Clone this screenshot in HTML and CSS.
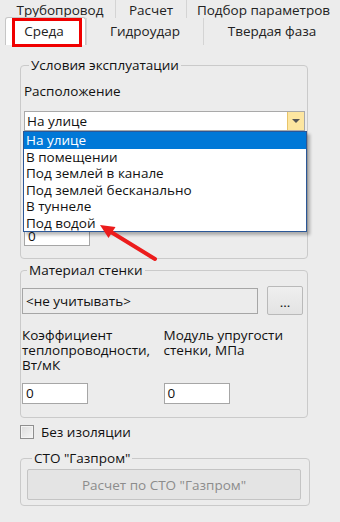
FILE: index.html
```html
<!DOCTYPE html>
<html lang="ru">
<head>
<meta charset="utf-8">
<link rel="stylesheet" href="styles.css">
</head>
<body>
<div class="tabs">
  <div class="tabrow row1">
    <span class="pad"></span>
    <span class="tab w110">Трубопровод</span>
    <span class="sep"></span>
    <span class="tab w70">Расчет</span>
    <span class="sep"></span>
    <span class="tab grow">Подбор параметров</span>
  </div>
  <div class="tabrow row2">
    <span class="pad"></span>
    <span class="tab sel">Среда</span>
    <span class="sep"></span>
    <span class="tab w116">Гидроудар</span>
    <span class="sep"></span>
    <span class="tab grow">Твердая фаза</span>
  </div>
  <div class="redbox"></div>
</div>

<div class="page">
  <fieldset class="group g1">
    <legend>Условия эксплуатации</legend>
    <div class="label first">Расположение</div>
    <div class="combo">
      <span class="combo-text">На улице</span>
      <span class="combo-btn"><span class="arrow"></span></span>
    </div>
    <div class="input depth">0</div>
  </fieldset>

  <fieldset class="group g2">
    <legend>Материал стенки</legend>
    <div class="matrow">
      <div class="matfield">&lt;не учитывать&gt;</div>
      <div class="btn dots">...</div>
    </div>
    <div class="cols">
      <div class="col">
        <div class="mlabel">Коэффициент<br>теплопроводности,<br>Вт/мК</div>
        <div class="input small">0</div>
      </div>
      <div class="col">
        <div class="mlabel">Модуль упругости<br>стенки, МПа</div>
        <div class="input small">0</div>
      </div>
    </div>
  </fieldset>

  <div class="check">
    <span class="box"></span>
    <span>Без изоляции</span>
  </div>

  <fieldset class="group g3">
    <legend>СТО "Газпром"</legend>
    <div class="btn wide">Расчет по СТО "Газпром"</div>
  </fieldset>
</div>

<ul class="droplist">
  <li class="hl">На улице</li>
  <li>В помещении</li>
  <li>Под землей в канале</li>
  <li>Под землей бесканально</li>
  <li>В туннеле</li>
  <li>Под водой</li>
</ul>

<svg class="redarrow" width="340" height="522" viewBox="0 0 340 522">
  <line x1="155" y1="259" x2="111" y2="232" stroke="#ec1c1c" stroke-width="4" stroke-linecap="round"/>
  <polygon points="100,225 115.5,227 108.5,238" fill="#ec1c1c"/>
</svg>
</body>
</html>
```

FILE: styles.css
```css
* { box-sizing: border-box; }
body {
  margin: 0;
  width: 340px;
  height: 522px;
  overflow: hidden;
  position: relative;
  background: #ececec;
  font: 13.5px "Open Sans", "Liberation Sans", Arial, sans-serif;
  color: #111;
}

/* tabs */
.tabs { position: relative; height: 46px; }
.tabrow { display: flex; }
.row1 { height: 18px; }
.row2 { height: 27px; }
.pad { width: 5px; flex: none; }
.tab { flex: none; text-align: center; color: #222; }
.row1 .tab { line-height: 21px; }
.row2 .tab { line-height: 27px; }
.w110 { width: 110px; }
.w70 { width: 70px; }
.w116 { width: 116px; }
.grow { flex: 1; }
.sep { width: 1px; flex: none; background: #d4d4d4; }
.tab.sel {
  width: 81px;
  background: #fff;
  border: 1px solid #c6c6c6;
  border-bottom: none;
  border-radius: 3px 3px 0 0;
  margin-top: -1px;
  padding-right: 3px;
}
.redbox {
  position: absolute;
  left: 12px;
  top: 18px;
  width: 70px;
  height: 29px;
  border: 3px solid #f00000;
}

/* page */
.page { padding: 12px 0 0 20px; }
.group {
  margin: 0;
  border: 1px solid #cacaca;
  border-radius: 4px;
  min-width: 0;
}
.group legend {
  padding: 0 2px;
  margin-left: 5px;
  line-height: 15px;
  color: #111;
}
.g1 { width: 288px; padding: 0 2px 12px 3px; }
.label.first { line-height: 16px; margin-top: 10px; }
.combo {
  margin-top: 12px;
  height: 20px;
  width: 281px;
  display: flex;
  background: #fff;
  border: 1px solid #a9a9a9;
}
.combo-text { flex: 1; line-height: 18px; padding-left: 2px; }
.combo-btn {
  width: 17px;
  background: #fde6a0;
  border-left: 1px solid #e8c46a;
  display: flex;
  align-items: center;
  justify-content: center;
}
.arrow {
  width: 0; height: 0;
  border-left: 4px solid transparent;
  border-right: 4px solid transparent;
  border-top: 4px solid #555;
}
.input {
  background: #fff;
  border: 1px solid #a6a6a6;
  padding-left: 3px;
  line-height: 18px;
}
.depth { margin-top: 95px; width: 66px; height: 20px; }

.g2 { width: 288px; margin-top: 4px; padding: 0 2px 13px 1px; }
.matrow { display: flex; align-items: center; margin-top: 8px; }
.matfield {
  width: 236px;
  height: 26px;
  border: 1px solid #a6a6a6;
  background: #ececec;
  padding: 3px 0 0 3px;
}
.btn {
  background: linear-gradient(#efefef, #e3e3e3);
  border: 1px solid #b9b9b9;
  border-radius: 2px;
  text-align: center;
}
.dots { width: 36px; height: 29px; margin-left: 9px; line-height: 30px; }
.cols { display: flex; margin-top: 13px; }
.col { width: 150px; }
.mlabel { line-height: 15px; height: 45px; }
.input.small { width: 66px; height: 21px; margin-top: 10px; line-height: 19px; }

.check { display: flex; align-items: center; height: 16px; margin-top: 6px; gap: 7px; }
.box {
  width: 14px; height: 14px;
  border: 1px solid #8f8f8f;
  background: linear-gradient(135deg, #dcdcdc, #f6f6f6);
  box-shadow: inset 0 0 0 1px #f4f4f4;
}

.g3 { width: 290px; margin-top: 11px; padding: 3px 8px 5px 6px; }
.wide { height: 31px; line-height: 30px; color: #8c8c8c; border-color: #c4c4c4; background: #e4e4e4; }

/* overlay dropdown */
.droplist {
  position: absolute;
  left: 23px;
  top: 131px;
  width: 284px;
  height: 101px;
  margin: 0;
  padding: 0;
  list-style: none;
  background: #fff;
  border: 1px solid #2b5797;
  box-shadow: 3px 3px 3px rgba(0,0,0,0.28);
}
.droplist li { line-height: 16.5px; padding-left: 2px; color: #111; }
.droplist li.hl { background: #0078d7; color: #fff; }

.redarrow { position: absolute; left: 0; top: 0; pointer-events: none; }
```
